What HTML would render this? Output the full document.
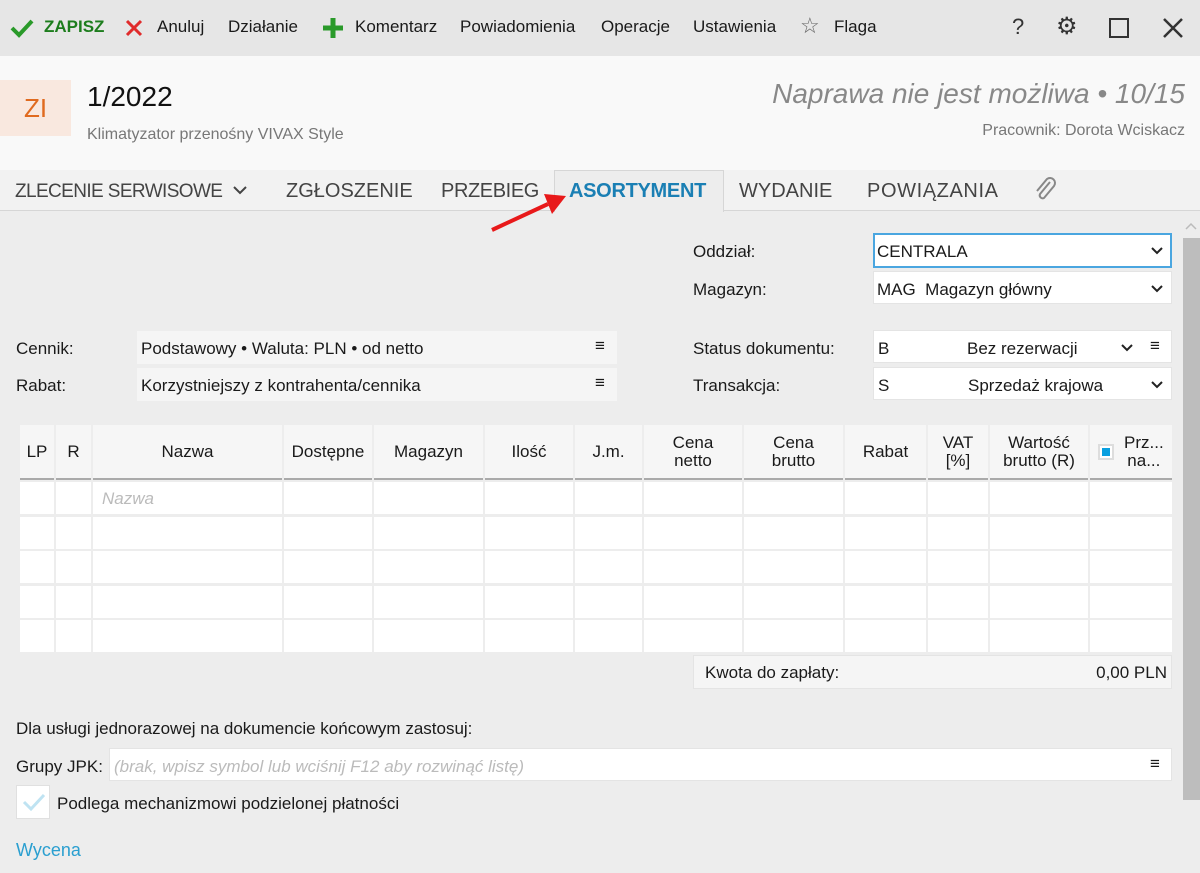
<!DOCTYPE html>
<html><head><meta charset="utf-8"><style>
*{box-sizing:border-box;margin:0;padding:0}
body{width:1200px;height:873px;overflow:hidden;background:#ededed;font-family:"Liberation Sans",sans-serif;font-size:17px;color:#1a1a1a;position:relative}
.a{position:absolute;white-space:nowrap}
.tb{top:0;left:0;width:1200px;height:56px;background:#e6e6e6}
.hd{top:56px;left:0;width:1200px;height:114px;background:#f9f9f9}
.tabs{top:170px;left:0;width:1200px;height:41px;background:#f2f2f2;border-bottom:1px solid #d6d6d6}
.tab{top:180px;font-size:20px;color:#444}
.in{background:#fff;height:33px;border:1px solid #e4e4e4}
.in2{background:#f5f5f5;height:33px}
.lbl{font-size:17px}
.hc{position:absolute;top:425px;height:55px;background:#f6f6f6;border-bottom:2px solid #aaa;text-align:center;font-size:17px;line-height:18px;display:flex;align-items:center;justify-content:center}
.cell{position:absolute;background:#fff;height:33px}
.chev{position:absolute}
</style></head><body>
<div class="a tb"></div>
<svg class="a" style="left:10px;top:18px" width="24" height="20"><path d="M2 10 L9 17 L22 3" stroke="#2a9a2a" stroke-width="4" fill="none"/></svg>
<div class="a" style="left:44px;top:17px;color:#1d7d1d;font-weight:bold">ZAPISZ</div>
<svg class="a" style="left:125px;top:19px" width="18" height="18"><path d="M2 2L16 16M16 2L2 16" stroke="#e02b2b" stroke-width="3"/></svg>
<div class="a" style="left:157px;top:17px">Anuluj</div>
<div class="a" style="left:228px;top:17px">Działanie</div>
<svg class="a" style="left:322px;top:17px" width="22" height="22"><path d="M11 1V21M1 11H21" stroke="#2a9a2a" stroke-width="5"/></svg>
<div class="a" style="left:355px;top:17px">Komentarz</div>
<div class="a" style="left:460px;top:17px">Powiadomienia</div>
<div class="a" style="left:601px;top:17px">Operacje</div>
<div class="a" style="left:693px;top:17px">Ustawienia</div>
<div class="a" style="left:800px;top:13px;font-size:22px;color:#666">☆</div>
<div class="a" style="left:834px;top:17px">Flaga</div>
<div class="a" style="left:1012px;top:14px;font-size:22px;color:#333">?</div>
<div class="a" style="left:1056px;top:12px;font-size:24px;color:#333">⚙</div>
<div class="a" style="left:1109px;top:18px;width:20px;height:20px;border:2px solid #333"></div>
<svg class="a" style="left:1163px;top:18px" width="20" height="20"><path d="M1 1L19 19M19 1L1 19" stroke="#333" stroke-width="2.5"/></svg>

<div class="a hd"></div>
<div class="a" style="left:0;top:80px;width:71px;height:56px;background:#f9e8df;color:#e06a1f;font-size:26px;text-align:center;line-height:56px">ZI</div>
<div class="a" style="left:87px;top:81px;font-size:28px;color:#111">1/2022</div>
<div class="a" style="left:87px;top:126px;font-size:16px;color:#777">Klimatyzator przenośny VIVAX Style</div>
<div class="a" style="right:15px;top:78px;font-size:28px;color:#888;font-style:italic">Naprawa nie jest możliwa • 10/15</div>
<div class="a" style="right:15px;top:122px;font-size:16px;color:#777">Pracownik: Dorota Wciskacz</div>

<div class="a tabs"></div>
<div class="a tab" style="left:15px;font-size:19px;letter-spacing:-0.6px;top:181px">ZLECENIE SERWISOWE</div>
<svg class="a" style="left:232px;top:184px" width="16" height="12"><path d="M2 3L8 9L14 3" stroke="#444" stroke-width="2" fill="none"/></svg>
<div class="a tab" style="left:286px">ZGŁOSZENIE</div>
<div class="a tab" style="left:441px;letter-spacing:-0.4px">PRZEBIEG</div>
<div class="a" style="left:554px;top:170px;width:170px;height:42px;background:#ededed;border:1px solid #d6d6d6;border-bottom:none"></div>
<div class="a tab" style="left:569px;color:#1a7fb4;font-weight:bold;letter-spacing:-0.3px">ASORTYMENT</div>
<div class="a tab" style="left:739px">WYDANIE</div>
<div class="a tab" style="left:867px;letter-spacing:0.6px">POWIĄZANIA</div>
<svg class="a" style="left:1032px;top:176px" width="26" height="28"><path d="M18 6 L8 18 a3 3 0 0 0 4 4 L22 10 a5 5 0 0 0 -7 -7 L5 15" stroke="#888" stroke-width="2" fill="none"/></svg>
<svg class="a" style="left:488px;top:192px" width="80" height="42"><path d="M4 38 L60 12" stroke="#e8191a" stroke-width="4"/><path d="M56 2 L78 4 L64 22 Z" fill="#e8191a"/></svg>

<svg class="a" style="left:1184px;top:222px" width="14" height="10"><path d="M2 7L7 2L12 7" stroke="#bbb" stroke-width="1.5" fill="none"/></svg>
<div class="a" style="left:1183px;top:238px;width:17px;height:562px;background:#bdbdbd"></div>

<div class="a lbl" style="left:693px;top:242px">Oddział:</div>
<div class="a" style="left:873px;top:233px;width:299px;height:35px;background:#fff;border:2px solid #4aa6e0"></div>
<div class="a" style="left:877px;top:242px">CENTRALA</div>
<svg class="chev" style="left:1151px;top:247px" width="12" height="8"><path d="M1 1L6 6L11 1" stroke="#222" stroke-width="2" fill="none"/></svg>
<div class="a lbl" style="left:693px;top:280px">Magazyn:</div>
<div class="a in" style="left:873px;top:271px;width:299px"></div>
<div class="a" style="left:877px;top:280px">MAG&nbsp; Magazyn główny</div>
<svg class="chev" style="left:1151px;top:285px" width="12" height="8"><path d="M1 1L6 6L11 1" stroke="#222" stroke-width="2" fill="none"/></svg>

<div class="a lbl" style="left:16px;top:339px">Cennik:</div>
<div class="a in2" style="left:137px;top:331px;width:480px"></div>
<div class="a" style="left:141px;top:339px">Podstawowy • Waluta: PLN • od netto</div>
<div class="a" style="left:595px;top:336px">≡</div>
<div class="a lbl" style="left:16px;top:376px">Rabat:</div>
<div class="a in2" style="left:137px;top:368px;width:480px"></div>
<div class="a" style="left:141px;top:376px">Korzystniejszy z kontrahenta/cennika</div>
<div class="a" style="left:595px;top:373px">≡</div>

<div class="a lbl" style="left:693px;top:339px">Status dokumentu:</div>
<div class="a in" style="left:873px;top:330px;width:299px"></div>
<div class="a" style="left:878px;top:339px">B</div>
<div class="a" style="left:967px;top:339px">Bez rezerwacji</div>
<svg class="chev" style="left:1121px;top:344px" width="12" height="8"><path d="M1 1L6 6L11 1" stroke="#222" stroke-width="2" fill="none"/></svg>
<div class="a" style="left:1150px;top:336px">≡</div>
<div class="a lbl" style="left:693px;top:376px">Transakcja:</div>
<div class="a in" style="left:873px;top:367px;width:299px"></div>
<div class="a" style="left:878px;top:376px">S</div>
<div class="a" style="left:968px;top:376px">Sprzedaż krajowa</div>
<svg class="chev" style="left:1151px;top:381px" width="12" height="8"><path d="M1 1L6 6L11 1" stroke="#222" stroke-width="2" fill="none"/></svg>

<div class="hc" style="left:20px;width:34px">LP</div>
<div class="hc" style="left:56px;width:35px">R</div>
<div class="hc" style="left:93px;width:189px">Nazwa</div>
<div class="hc" style="left:284px;width:88px">Dostępne</div>
<div class="hc" style="left:374px;width:109px">Magazyn</div>
<div class="hc" style="left:485px;width:88px">Ilość</div>
<div class="hc" style="left:575px;width:67px">J.m.</div>
<div class="hc" style="left:644px;width:98px">Cena<br>netto</div>
<div class="hc" style="left:744px;width:99px">Cena<br>brutto</div>
<div class="hc" style="left:845px;width:81px">Rabat</div>
<div class="hc" style="left:928px;width:60px">VAT<br>[%]</div>
<div class="hc" style="left:990px;width:98px">Wartość<br>brutto (R)</div>
<div class="hc" style="left:1090px;width:82px;justify-content:flex-start;padding-left:8px"><span style="display:inline-block;width:16px;height:16px;border:2px solid #ddd;background:#fff;position:relative;margin-right:10px"><span style="position:absolute;left:2px;top:2px;width:8px;height:8px;background:#0aa0e0"></span></span><span>Prz...<br>na...</span></div>
<div class="a" id="rows"></div>
<script>
var xs=[[20,34],[56,35],[93,189],[284,88],[374,109],[485,88],[575,67],[644,98],[744,99],[845,81],[928,60],[990,98],[1090,82]];
var ys=[482,517,551,586,620];var h='';
ys.forEach(function(y){xs.forEach(function(c){h+='<div class="cell" style="left:'+c[0]+'px;top:'+y+'px;width:'+c[1]+'px;height:32px"></div>';});});
document.getElementById('rows').outerHTML=h;
</script>
<div class="a" style="left:102px;top:489px;color:#bbb;font-style:italic">Nazwa</div>

<div class="a" style="left:693px;top:655px;width:479px;height:34px;background:#f5f5f5;border:1px solid #e4e4e4"></div>
<div class="a" style="left:705px;top:663px">Kwota do zapłaty:</div>
<div class="a" style="right:33px;top:663px">0,00 PLN</div>

<div class="a" style="left:16px;top:719px">Dla usługi jednorazowej na dokumencie końcowym zastosuj:</div>
<div class="a" style="left:16px;top:757px">Grupy JPK:</div>
<div class="a in" style="left:109px;top:748px;width:1063px;background:#fff"></div>
<div class="a" style="left:114px;top:757px;color:#bbb;font-style:italic">(brak, wpisz symbol lub wciśnij F12 aby rozwinąć listę)</div>
<div class="a" style="left:1150px;top:754px">≡</div>
<div class="a" style="left:16px;top:785px;width:34px;height:34px;background:#fff;border:1px solid #e0e0e0"></div>
<svg class="a" style="left:22px;top:791px" width="24" height="22"><path d="M2 11 L9 18 L22 4" stroke="#bfe3f2" stroke-width="3" fill="none"/></svg>
<div class="a" style="left:57px;top:794px">Podlega mechanizmowi podzielonej płatności</div>
<div class="a" style="left:16px;top:840px;color:#2a9fd0;font-size:18px">Wycena</div>
</body></html>
